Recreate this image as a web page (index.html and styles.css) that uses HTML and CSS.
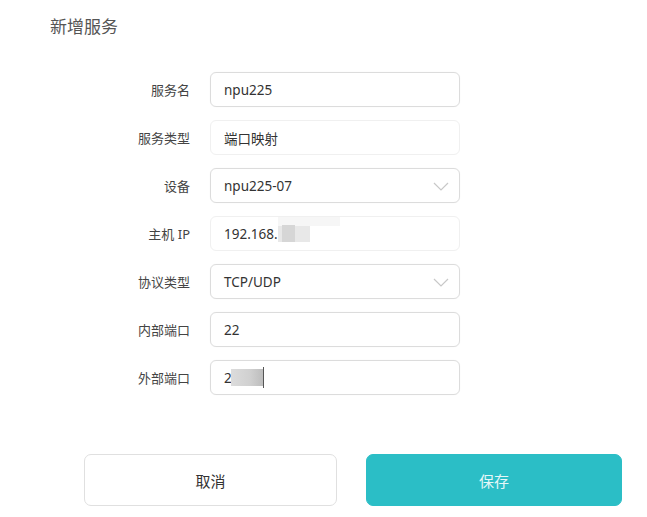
FILE: index.html
```html
<!DOCTYPE html>
<html lang="zh">
<head>
<meta charset="utf-8">
<link rel="stylesheet" href="styles.css">
</head>
<body>
<div class="page">
  <h1 class="title">新增服务</h1>
  <div class="form">
    <div class="row">
      <label class="label">服务名</label>
      <div class="field">npu225</div>
    </div>
    <div class="row">
      <label class="label">服务类型</label>
      <div class="field disabled">端口映射</div>
    </div>
    <div class="row">
      <label class="label">设备</label>
      <div class="field select">npu225-07
        <svg class="chev" width="16" height="9" viewBox="0 0 16 9"><path d="M1 1l7 7 7-7" fill="none" stroke="#c8c8c8" stroke-width="1.2"/></svg>
      </div>
    </div>
    <div class="row">
      <label class="label">主机 IP</label>
      <div class="field disabled">192.168.<span class="mask mask-ip"><span class="mask-dark"></span></span></div>
    </div>
    <div class="row">
      <label class="label">协议类型</label>
      <div class="field select">TCP/UDP
        <svg class="chev" width="16" height="9" viewBox="0 0 16 9"><path d="M1 1l7 7 7-7" fill="none" stroke="#c8c8c8" stroke-width="1.2"/></svg>
      </div>
    </div>
    <div class="row">
      <label class="label">内部端口</label>
      <div class="field">22</div>
    </div>
    <div class="row">
      <label class="label">外部端口</label>
      <div class="field">2<span class="mask mask-port"></span><span class="cursor"></span></div>
    </div>
  </div>
  <div class="actions">
    <button class="btn btn-cancel">取消</button>
    <button class="btn btn-save">保存</button>
  </div>
</div>
</body>
</html>
```
FILE: styles.css
```css
html, body {
  margin: 0;
  padding: 0;
  background: #fff;
}
body {
  font-family: "Noto Sans", "Noto Sans CJK SC", sans-serif;
  color: #333;
  width: 647px;
  height: 517px;
  overflow: hidden;
}
.page {
  padding: 15px 0 0 50px;
}
.title {
  margin: 0;
  font-size: 17px;
  font-weight: normal;
  color: #555;
  line-height: 24px;
}
.form {
  margin-top: 33px;
  display: flex;
  flex-direction: column;
  gap: 13px;
}
.row {
  display: flex;
  align-items: center;
  height: 35px;
}
.label {
  width: 140px;
  text-align: right;
  font-size: 13px;
  color: #444;
  padding-right: 20px;
}
.field {
  box-sizing: border-box;
  width: 250px;
  height: 35px;
  border: 1px solid #dcdcdc;
  border-radius: 6px;
  box-shadow: 0 0 1px rgba(0,0,0,0.08);
  padding: 0 13px;
  display: flex;
  align-items: center;
  font-size: 13.5px;
  color: #333;
  position: relative;
}
.field.disabled {
  border-color: #f0f0f0;
  box-shadow: none;
}
.chev {
  position: absolute;
  right: 10px;
  top: 13px;
}
.mask {
  display: inline-block;
  position: relative;
}
.mask-ip {
  width: 32px;
  height: 17px;
  background: #e8e8e8;
  margin-left: 0;
}
.mask-ip::before {
  content: "";
  position: absolute;
  left: 0;
  top: -8px;
  width: 62px;
  height: 9px;
  background: #f6f6f6;
}
.mask-dark {
  position: absolute;
  left: 4px;
  top: 0;
  width: 13px;
  height: 17px;
  background: #d6d6d6;
}
.mask-port {
  width: 32px;
  height: 17px;
  background: linear-gradient(to right, #dcdcdc 0, #d0d0d0 60%, #bdbdbd 100%);
  margin-left: -1px;
}
.cursor {
  display: inline-block;
  width: 1px;
  height: 21px;
  background: #555;
}
.actions {
  margin-top: 59px;
  margin-left: 34px;
  display: flex;
  gap: 29px;
}
.btn {
  font-family: "Noto Sans", "Noto Sans CJK SC", sans-serif;
  font-size: 15px;
  height: 52px;
  border-radius: 7px;
  cursor: pointer;
}
.btn-cancel {
  width: 253px;
  background: #fff;
  border: 1.5px solid #e0e0e0;
  color: #333;
}
.btn-save {
  width: 256px;
  background: #2bbec6;
  border: 1px solid #2bbec6;
  color: #e6f7f8;
}
```
